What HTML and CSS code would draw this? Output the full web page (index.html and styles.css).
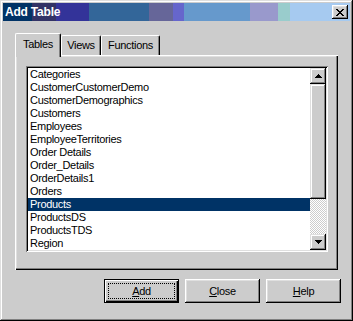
FILE: index.html
```html
<!DOCTYPE html>
<html>
<head>
<meta charset="utf-8">
<link rel="stylesheet" href="styles.css">
</head>
<body>
<div class="window">
  <div class="titlebar">
    <span class="title">Add Table</span>
    <button class="close" aria-label="Close">
      <svg width="8" height="7" viewBox="0 0 8 7" shape-rendering="crispEdges"><path fill="#000" d="M0 0h2v1H0zM6 0h2v1H6zM1 1h2v1H1zM5 1h2v1H5zM2 2h4v1H2zM3 3h2v1H3zM2 4h4v1H2zM1 5h2v1H1zM5 5h2v1H5zM0 6h2v1H0zM6 6h2v1H6z"/></svg>
    </button>
  </div>
  <div class="content">
    <div class="tabs">
      <div class="tab selected tab-tables">Tables</div>
      <div class="tab tab-views">Views</div>
      <div class="tab tab-functions">Functions</div>
    </div>
    <div class="panel">
      <div class="listbox">
        <ul class="items">
          <li>Categories</li>
          <li>CustomerCustomerDemo</li>
          <li>CustomerDemographics</li>
          <li>Customers</li>
          <li>Employees</li>
          <li>EmployeeTerritories</li>
          <li>Order Details</li>
          <li>Order_Details</li>
          <li>OrderDetails1</li>
          <li>Orders</li>
          <li class="sel">Products</li>
          <li>ProductsDS</li>
          <li>ProductsTDS</li>
          <li>Region</li>
        </ul>
        <div class="scrollbar">
          <div class="sb-btn">
            <svg width="7" height="4" viewBox="0 0 7 4" shape-rendering="crispEdges"><path fill="#000" d="M3 0h1v1H3zM2 1h3v1H2zM1 2h5v1H1zM0 3h7v1H0z"/></svg>
          </div>
          <div class="thumb"></div>
          <div class="track"></div>
          <div class="sb-btn">
            <svg width="7" height="4" viewBox="0 0 7 4" shape-rendering="crispEdges"><path fill="#000" d="M0 0h7v1H0zM1 1h5v1H1zM2 2h3v1H2zM3 3h1v1H3z"/></svg>
          </div>
        </div>
      </div>
    </div>
  </div>
  <div class="buttons">
    <button class="btn default"><span class="focus"><u>A</u>dd</span></button>
    <button class="btn"><span class="focus-none"><u>C</u>lose</span></button>
    <button class="btn"><span class="focus-none"><u>H</u>elp</span></button>
  </div>
</div>
</body>
</html>
```
FILE: styles.css
```css
html, body {
  margin: 0;
  padding: 0;
  background: #cccccc;
}

body {
  font-family: "Liberation Sans", Arial, sans-serif;
  font-size: 11px;
  color: #000;
}

.window {
  width: 353px;
  height: 321px;
  box-sizing: border-box;
  padding: 3px;
  background: #cccccc;
  box-shadow: inset -1px -1px #000, inset 1px 1px #dfdfdf, inset -2px -2px #808080, inset 2px 2px #fff;
}

.titlebar {
  height: 18px;
  display: flex;
  align-items: center;
  justify-content: space-between;
  padding: 0 2px;
  background: linear-gradient(to right,
    #003366 0 29px,
    #333366 29px 53px,
    #333399 53px 86px,
    #336699 86px 146px,
    #666699 146px 170px,
    #6666cc 170px 181px,
    #6699cc 181px 247px,
    #9999cc 247px 275px,
    #99cccc 275px 287px,
    #a6caf0 287px);
}

.title {
  color: #fff;
  font-weight: bold;
  font-size: 12px;
  letter-spacing: -0.2px;
  line-height: 18px;
}

.close {
  width: 16px;
  height: 14px;
  padding: 0;
  border: 0;
  background: #cccccc;
  display: flex;
  align-items: center;
  justify-content: center;
  box-shadow: inset -1px -1px #000, inset 1px 1px #fff, inset -2px -2px #808080, inset 2px 2px #dfdfdf;
}

.content {
  padding: 12px 12px 0;
}

.tabs {
  display: flex;
  align-items: flex-start;
  height: 22px;
}

.tab {
  box-sizing: border-box;
  height: 20px;
  margin-top: 2px;
  padding-top: 3px;
  text-align: center;
  line-height: 13px;
  letter-spacing: -0.3px;
  background: #cccccc;
  border-top: 1px solid #fff;
  border-left: 1px solid #fff;
  border-right: 1px solid #000;
  border-radius: 2px 2px 0 0;
  box-shadow: inset -1px 0 #808080;
}

.tab.selected {
  height: 24px;
  margin-top: 0;
  padding-top: 4px;
  position: relative;
  z-index: 1;
}

.tab-tables { width: 46px; }
.tab-views { width: 40px; }
.tab-functions { width: 59px; }

.panel {
  height: 215px;
  box-sizing: border-box;
  padding: 11px 10px 0 11px;
  box-shadow: inset 1px 1px #fff, inset -1px -1px #000, inset -2px -2px #808080, inset 2px 2px #dfdfdf;
}

.listbox {
  width: 302px;
  height: 186px;
  box-sizing: border-box;
  padding: 2px;
  display: flex;
  background: #fff;
  box-shadow: inset 1px 1px #808080, inset -1px -1px #fff, inset 2px 2px #000, inset -2px -2px #dfdfdf;
}

.items {
  flex: 1;
  list-style: none;
  margin: 0;
  padding: 0;
  overflow: hidden;
}

.items li {
  height: 13px;
  line-height: 13px;
  padding-left: 2px;
  white-space: nowrap;
  letter-spacing: -0.3px;
}

.items li.sel {
  background: #003366;
  color: #fff;
}

.scrollbar {
  width: 16px;
  display: flex;
  flex-direction: column;
}

.sb-btn, .thumb {
  background: #cccccc;
  box-shadow: inset -1px -1px #000, inset 1px 1px #dfdfdf, inset -2px -2px #808080, inset 2px 2px #fff;
}

.sb-btn {
  height: 16px;
  display: flex;
  align-items: center;
  justify-content: center;
}

.thumb {
  height: 115px;
}

.track {
  flex: 1;
  background: conic-gradient(#cccccc 25%, #fff 0 50%, #cccccc 0 75%, #fff 0) 0 0 / 2px 2px;
}

.buttons {
  display: flex;
  justify-content: flex-end;
  gap: 6px;
  margin-top: 9px;
  padding-right: 9px;
}

.btn {
  width: 75px;
  height: 24px;
  padding: 4px;
  border: 0;
  background: #cccccc;
  font-family: "Liberation Sans", Arial, sans-serif;
  font-size: 11px;
  letter-spacing: -0.3px;
  color: #000;
  display: flex;
  box-shadow: inset -1px -1px #000, inset 1px 1px #fff, inset -2px -2px #808080, inset 2px 2px #dfdfdf;
}

.btn.default {
  box-shadow: inset 0 0 0 1px #000, inset 2px 2px #fff, inset -2px -2px #000, inset -3px -3px #808080;
}

.focus, .focus-none {
  flex: 1;
  display: flex;
  align-items: center;
  justify-content: center;
  box-sizing: border-box;
  border: 1px dotted transparent;
}

.focus {
  border-color: #000;
}
```
